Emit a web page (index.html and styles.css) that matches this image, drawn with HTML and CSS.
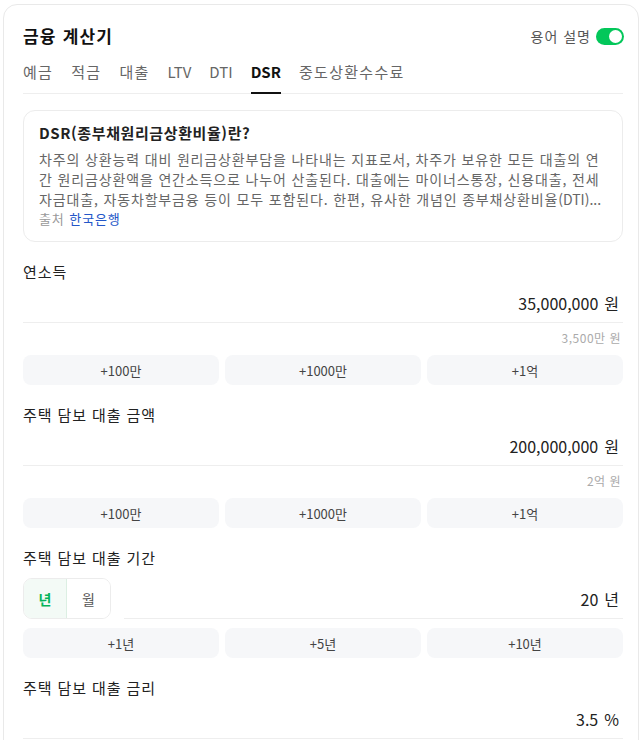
FILE: index.html
```html
<!DOCTYPE html>
<html lang="ko">
<head>
<meta charset="utf-8">
<title>금융 계산기</title>
<link rel="stylesheet" href="styles.css">
</head>
<body>
<div class="card">
  <header class="header">
    <h1 class="title">금융 계산기</h1>
    <label class="glossary">
      <span>용어 설명</span>
      <span class="switch"><span class="knob"></span></span>
    </label>
  </header>

  <nav class="tabs">
    <a class="tab">예금</a>
    <a class="tab">적금</a>
    <a class="tab">대출</a>
    <a class="tab latin">LTV</a>
    <a class="tab latin">DTI</a>
    <a class="tab latin active">DSR</a>
    <a class="tab">중도상환수수료</a>
  </nav>

  <section class="info">
    <h2 class="info-title">DSR(종부채원리금상환비율)란?</h2>
    <p class="info-text">차주의 상환능력 대비 원리금상환부담을 나타내는 지표로서, 차주가 보유한 모든 대출의 연간 원리금상환액을 연간소득으로 나누어 산출된다. 대출에는 마이너스통장, 신용대출, 전세자금대출, 자동차할부금융 등이 모두 포함된다. 한편, 유사한 개념인 종부채상환비율<span class="latin-run">(DTI)...</span></p>
    <p class="source">출처 <a class="source-link">한국은행</a></p>
  </section>

  <section class="field">
    <div class="label">연소득</div>
    <div class="input"><span class="num">35,000,000</span><span class="unit">원</span></div>
    <div class="sub">3,500만 원</div>
    <div class="quick">
      <button class="qbtn">+100만</button>
      <button class="qbtn">+1000만</button>
      <button class="qbtn">+1억</button>
    </div>
  </section>

  <section class="field">
    <div class="label">주택 담보 대출 금액</div>
    <div class="input"><span class="num">200,000,000</span><span class="unit">원</span></div>
    <div class="sub">2억 원</div>
    <div class="quick">
      <button class="qbtn">+100만</button>
      <button class="qbtn">+1000만</button>
      <button class="qbtn">+1억</button>
    </div>
  </section>

  <section class="field">
    <div class="label">주택 담보 대출 기간</div>
    <div class="period-row">
      <div class="segment">
        <button class="seg active">년</button>
        <button class="seg">월</button>
      </div>
      <div class="input grow"><span class="num">20</span><span class="unit">년</span></div>
    </div>
    <div class="quick">
      <button class="qbtn">+1년</button>
      <button class="qbtn">+5년</button>
      <button class="qbtn">+10년</button>
    </div>
  </section>

  <section class="field">
    <div class="label">주택 담보 대출 금리</div>
    <div class="input"><span class="num">3.5</span><span class="unit">%</span></div>
  </section>
</div>
</body>
</html>
```

FILE: styles.css
```css
* { box-sizing: border-box; }

body {
  margin: 0;
  background: #fff;
  font-family: "Noto Sans CJK KR", "Noto Sans", sans-serif;
  color: #222;
}

.card {
  margin: 4px 3px 0 3px;
  border: 1px solid #e9e9e9;
  border-radius: 14px;
  padding: 19px 15px 40px 19px;
  background: #fff;
}

.header {
  display: flex;
  justify-content: space-between;
  align-items: center;
  height: 24px;
}

.title {
  margin: 0;
  font-size: 17px;
  line-height: 24px;
  font-weight: 700;
  letter-spacing: 1.2px;
  color: #111;
}

.glossary {
  display: flex;
  align-items: center;
  gap: 5px;
  font-size: 14px;
  line-height: 20px;
  letter-spacing: 1px;
  color: #555;
  margin-right: -1px;
}

.switch {
  position: relative;
  width: 28px;
  height: 17px;
  border-radius: 9px;
  background: #03c75a;
}

.knob {
  position: absolute;
  right: 2px;
  top: 2px;
  width: 13px;
  height: 13px;
  border-radius: 50%;
  background: #fff;
}

.tabs {
  display: flex;
  gap: 18px;
  margin-top: 13px;
  border-bottom: 1px solid #eeeeee;
}

.tab {
  font-size: 15px;
  line-height: 22px;
  letter-spacing: 1.3px;
  color: #666;
  padding-bottom: 9px;
  border-bottom: 2px solid transparent;
  margin-bottom: -1px;
}

.tab.latin {
  letter-spacing: 0;
}

.tab.active {
  color: #111;
  font-weight: 700;
  border-bottom-color: #111;
}

.info {
  margin-top: 16px;
  border: 1px solid #ececec;
  border-radius: 12px;
  padding: 12px 16px 12px 15px;
}

.info-title {
  margin: 0;
  font-size: 15px;
  line-height: 20px;
  font-weight: 700;
  letter-spacing: 0.6px;
  color: #222;
}

.info-text {
  margin: 6px 0 0;
  font-size: 14px;
  line-height: 20px;
  letter-spacing: 0.85px;
  color: #666;
}

.latin-run {
  letter-spacing: 0;
}

.source {
  margin: 0;
  font-size: 13px;
  line-height: 20px;
  letter-spacing: 0.9px;
  color: #999;
}

.source-link {
  color: #2356c8;
}

.field {
  margin-top: 19px;
}

.label {
  font-size: 15px;
  line-height: 22px;
  letter-spacing: 0.9px;
  color: #222;
}

.input {
  display: flex;
  justify-content: flex-end;
  align-items: center;
  gap: 6px;
  height: 40px;
  padding: 0 4px 0 0;
  border-bottom: 1px solid #eeeeee;
  font-size: 16px;
  color: #222;
}

.grow { flex: 1; }

.sub {
  margin-top: 7px;
  text-align: right;
  font-size: 12px;
  line-height: 16px;
  letter-spacing: 0.5px;
  color: #aaa;
  padding-right: 2px;
}

.quick {
  display: grid;
  grid-template-columns: repeat(3, 1fr);
  gap: 6px;
  margin-top: 9px;
}

.qbtn {
  height: 30px;
  border: 0;
  border-radius: 8px;
  background: #f6f7f9;
  font-family: inherit;
  font-size: 13px;
  color: #444;
  padding: 0;
}

.period-row {
  display: flex;
  align-items: flex-end;
  gap: 13px;
}

.segment {
  display: flex;
  margin-top: 9px;
  height: 41px;
  border: 1px solid #ececec;
  border-radius: 9px;
  overflow: hidden;
}

.seg {
  width: 43px;
  border: 0;
  background: #fff;
  font-family: inherit;
  font-size: 14px;
  color: #555;
  padding: 0;
}

.seg.active {
  background: #f3faf6;
  color: #03b45a;
  font-weight: 700;
  border-right: 1px solid #dcefe3;
}
```
